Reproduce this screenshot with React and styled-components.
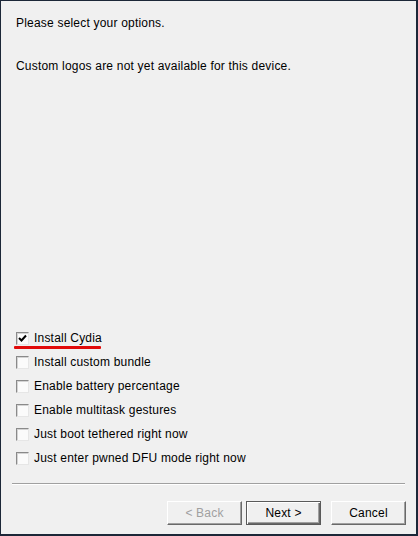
import styled, { createGlobalStyle } from 'styled-components'

const GlobalStyle = createGlobalStyle`
  html, body {
    margin: 0;
    padding: 0;
    background: #f0f0f0;
  }
  * {
    box-sizing: border-box;
  }
`

const Window = styled.div`
  width: 418px;
  height: 536px;
  display: flex;
  flex-direction: column;
  background: #f0f0f0;
  border-top: 1px solid #1c2738;
  border-left: 1px solid #1c2738;
  border-right: 2px solid #1c2738;
  border-bottom: 2px solid #1c2738;
  font-family: 'Liberation Sans', Arial, sans-serif;
  font-size: 12px;
  letter-spacing: 0.2px;
  color: #000;
`

const Body = styled.div`
  flex: 1;
  display: flex;
  flex-direction: column;
  padding: 15px 0 0 15px;
`

const Message = styled.p`
  margin: 0 0 ${(p) => p.$gap || 0}px;
  line-height: 14px;
`

const Options = styled.div`
  margin-top: auto;
  display: flex;
  flex-direction: column;
  padding-bottom: 13px;
`

const Option = styled.label`
  position: relative;
  display: flex;
  align-items: center;
  gap: 5px;
  height: 24px;
`

const Box = styled.span`
  width: 13px;
  height: 13px;
  display: flex;
  align-items: center;
  justify-content: center;
  background: #fbfbfb;
  border-top: 1px solid #8a8a8a;
  border-left: 1px solid #8a8a8a;
  border-right: 1px solid #e6e6e6;
  border-bottom: 1px solid #e6e6e6;
  box-shadow: inset 1px 1px 0 #d4d4d4;
`

const Underline = styled.span`
  position: absolute;
  left: -2px;
  top: 20px;
  width: 87px;
  height: 3px;
  background: #e10a0a;
  border-radius: 1px;
`

const Separator = styled.hr`
  margin: 0 11px 0 11px;
  border: 0;
  border-top: 1px solid #a0a0a0;
  border-bottom: 1px solid #fff;
`

const Footer = styled.div`
  display: flex;
  justify-content: flex-end;
  align-items: center;
  gap: 4px;
  padding: 16px 10px 9px 0;
`

const Button = styled.button`
  width: 75px;
  height: 24px;
  padding: 0;
  font-family: inherit;
  font-size: 12px;
  letter-spacing: inherit;
  color: ${(p) => (p.disabled ? '#a0a0a0' : '#000')};
  background: #f0f0f0;
  border: 1px solid ${(p) => (p.$default ? '#5a5a5a' : 'transparent')};
  border-top-color: ${(p) => (p.$default ? '#5a5a5a' : '#fff')};
  border-left-color: ${(p) => (p.$default ? '#5a5a5a' : '#fff')};
  border-right-color: ${(p) => (p.$default ? '#5a5a5a' : '#696969')};
  border-bottom-color: ${(p) => (p.$default ? '#5a5a5a' : '#696969')};
  box-shadow: ${(p) =>
    p.$default
      ? 'inset 1px 1px 0 #fff, inset -1px -1px 0 #696969, inset -2px -2px 0 #a0a0a0'
      : 'inset -1px -1px 0 #a0a0a0'};
  margin-left: ${(p) => p.$spaced || 0}px;
`

const Check = () => (
  <svg width="9" height="9" viewBox="0 0 9 9">
    <path d="M1 4 L3.5 6.5 L8 1.5" fill="none" stroke="#000" strokeWidth="2" />
  </svg>
)

const options = [
  { label: 'Install Cydia', checked: true, marked: true },
  { label: 'Install custom bundle' },
  { label: 'Enable battery percentage' },
  { label: 'Enable multitask gestures' },
  { label: 'Just boot tethered right now' },
  { label: 'Just enter pwned DFU mode right now' },
]

export default function App() {
  return (
    <>
      <GlobalStyle />
      <Window>
        <Body>
          <Message $gap={29}>Please select your options.</Message>
          <Message>Custom logos are not yet available for this device.</Message>
          <Options>
            {options.map((o) => (
              <Option key={o.label}>
                <Box>{o.checked && <Check />}</Box>
                {o.label}
                {o.marked && <Underline />}
              </Option>
            ))}
          </Options>
        </Body>
        <Separator />
        <Footer>
          <Button disabled>&lt; Back</Button>
          <Button $default>Next &gt;</Button>
          <Button $spaced={6}>Cancel</Button>
        </Footer>
      </Window>
    </>
  )
}
